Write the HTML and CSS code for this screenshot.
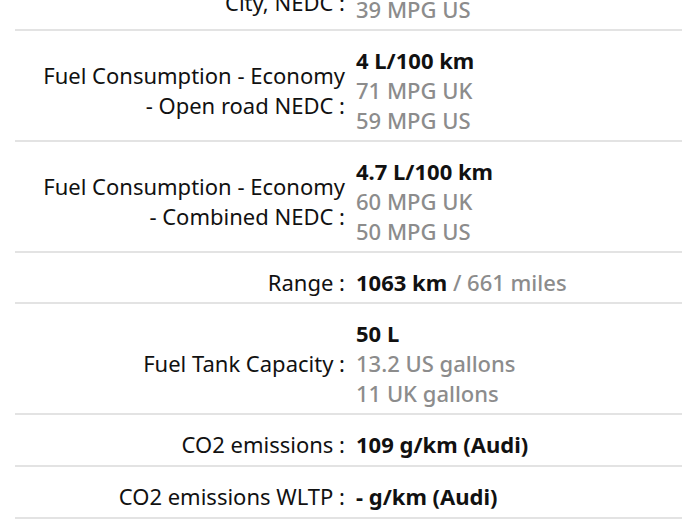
FILE: index.html
```html
<!DOCTYPE html>
<html lang="en">
<head>
  <meta charset="UTF-8" />
  <title>Fuel economy</title>
  <meta name="viewport" content="width=device-width, initial-scale=1.0">
  <link rel="stylesheet" href="styles.css">
</head>
<body>
  <div class="specs">
    <div class="spec-row">
      <div class="spec-label spec-label--low">Fuel Consumption - Economy -<br>City, NEDC :</div>
      <div class="spec-value">
        <div class="main">4.7 L/100 km</div>
        <div class="sub">60 MPG UK</div>
        <div class="sub">39 MPG US</div>
      </div>
    </div>

    <div class="spec-row">
      <div class="spec-label">Fuel Consumption - Economy<br>- Open road NEDC :</div>
      <div class="spec-value">
        <div class="main">4 L/100 km</div>
        <div class="sub">71 MPG UK</div>
        <div class="sub">59 MPG US</div>
      </div>
    </div>

    <div class="spec-row">
      <div class="spec-label">Fuel Consumption - Economy<br>- Combined NEDC :</div>
      <div class="spec-value">
        <div class="main">4.7 L/100 km</div>
        <div class="sub">60 MPG UK</div>
        <div class="sub">50 MPG US</div>
      </div>
    </div>

    <div class="spec-row">
      <div class="spec-label">Range :</div>
      <div class="spec-value">
        <div class="main">1063 km <span class="sub-inline">/ 661 miles</span></div>
      </div>
    </div>

    <div class="spec-row">
      <div class="spec-label">Fuel Tank Capacity :</div>
      <div class="spec-value">
        <div class="main">50 L</div>
        <div class="sub">13.2 US gallons</div>
        <div class="sub">11 UK gallons</div>
      </div>
    </div>

    <div class="spec-row spec-row--single">
      <div class="spec-label">CO2 emissions :</div>
      <div class="spec-value">
        <div class="main">109 g/km (Audi)</div>
      </div>
    </div>

    <div class="spec-row spec-row--single">
      <div class="spec-label">CO2 emissions WLTP :</div>
      <div class="spec-value">
        <div class="main">- g/km (Audi)</div>
      </div>
    </div>
  </div>
</body>
</html>
```

FILE: styles.css
```css
body {
  margin: 0;
  background: #ffffff;
  font-family: 'Noto Sans', Roboto, sans-serif;
  color: #111;
  overflow: hidden;
}
.specs {
  margin: -80px 18px 0 15px;
}
.spec-row {
  display: grid;
  grid-template-columns: 330px 1fr;
  column-gap: 11px;
  align-items: center;
  padding: 14px 0 5px;
  border-bottom: 2px solid #e3e3e3;
  font-size: 22px;
  line-height: 30px;
}
.spec-row--single {
  padding-bottom: 6px;
}
.spec-label {
  text-align: right;
  color: #111;
}
.spec-label--low {
  padding-top: 15px;
}
.spec-value .main {
  font-weight: 700;
  color: #111;
}
.spec-value .sub, .sub-inline {
  font-weight: 500;
  color: #8c8c8c;
}
```
